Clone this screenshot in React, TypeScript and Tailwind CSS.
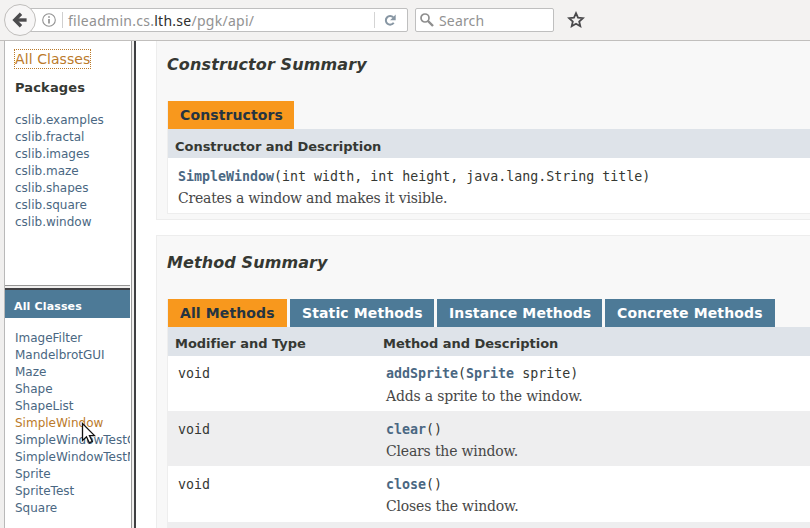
import React from "react";

const sans = "font-['DejaVu_Sans',sans-serif]";
const mono = "font-['DejaVu_Sans_Mono',monospace]";
const serif = "font-['DejaVu_Serif',serif]";

const packages = ["cslib.examples", "cslib.fractal", "cslib.images", "cslib.maze", "cslib.shapes", "cslib.square", "cslib.window"];
const classes = ["ImageFilter", "MandelbrotGUI", "Maze", "Shape", "ShapeList", "SimpleWindow", "SimpleWindowTestGUI", "SimpleWindowTestMain", "Sprite", "SpriteTest", "Square"];

function Toolbar() {
  return (
    <header className="relative flex h-[41px] shrink-0 items-center border-b border-[#c1bfbd] bg-[#f3f2f1] font-['Noto_Sans',sans-serif] text-[14px] text-[#929292]">
      <div className="ml-[20px] flex h-[24px] w-[388px] items-center rounded-[2px] border border-[#bfbfbf] bg-white">
        <svg className="ml-[21px] shrink-0" width="14" height="14" viewBox="0 0 14 14" fill="none" stroke="#929292">
          <circle cx="7" cy="7" r="6.3" strokeWidth="1.1" />
          <path d="M7 6v4.6M7 3.2v1.6" strokeWidth="1.7" />
        </svg>
        <span className="ml-[6px] h-[16px] w-px bg-[#cfcfcf]" />
        <span className="ml-[5px] w-[306px] whitespace-pre pt-px leading-[22px] tracking-[0.27px]">
          fileadmin.cs.<span className="text-[#2e2e2e]">lth.se</span>/pgk/api/
        </span>
        <span className="h-[16px] w-px bg-[#d4d4d4]" />
        <svg className="ml-[9px]" width="13" height="13" viewBox="0 0 13 13">
          <path d="M9.7 8.8A4.3 4.3 0 1 1 9.2 3.3" fill="none" stroke="#8796a3" strokeWidth="2" />
          <path d="M11.7 .6v5.6H6.1z" fill="#8796a3" />
        </svg>
      </div>
      <div className="ml-[7px] flex h-[24px] w-[139px] items-center rounded-[2px] border border-[#bfbfbf] bg-white">
        <svg className="ml-[4px]" width="14" height="14" viewBox="0 0 14 14" fill="none" stroke="#8e8e8e">
          <circle cx="5" cy="5" r="4" strokeWidth="1.7" />
          <path d="M8 8l5 5" strokeWidth="2.4" />
        </svg>
        <span className="ml-[5px] pt-px leading-[22px] tracking-[0.15px]">Search</span>
      </div>
      <svg className="ml-[13px]" width="18" height="18" viewBox="0 0 18 18" fill="none" stroke="#4a4a4c" strokeWidth="1.8">
        <path d="M9 2.2l2 4.5 4.9.5-3.7 3.3 1.1 4.8L9 12.8l-4.3 2.5 1.1-4.8L2.1 7.2 7 6.7z" />
      </svg>
      <div className="absolute left-[4px] top-[4px] flex h-[32px] w-[32px] items-center justify-center rounded-full border border-[#c0bebc] bg-[#f7f6f6]">
        <svg width="16" height="16" viewBox="0 0 16 16" fill="none" stroke="#4c4c4e">
          <path d="M9 1.8L2.8 8 9 14.2" strokeWidth="3.4" />
          <path d="M3 8h11.6" strokeWidth="3.4" />
        </svg>
      </div>
    </header>
  );
}

function Sidebar() {
  return (
    <aside className={`${sans} flex w-[125px] shrink-0 flex-col text-[12px] text-[#4a6782]`}>
      <section className="h-[244px] shrink-0 overflow-hidden bg-white pl-[10px] pt-[9px]">
        <div className="flex h-[18px] w-[75px] items-center whitespace-nowrap text-[14px] tracking-[0.08px] text-[#bb7a2a] outline-1 -outline-offset-0 outline-dotted outline-[#bb7a2a]">All Classes</div>
        <h2 className="mt-[10px] text-[13px] font-bold leading-[20px] tracking-[0.15px] text-[#353833]">Packages</h2>
        <ul className="mt-[14px]">
          {packages.map((p) => <li key={p} className="h-[17px] leading-[17px]">{p}</li>)}
        </ul>
      </section>
      <div className="h-[3px] shrink-0 border-t border-[#959595] bg-[#f0efee]" />
      <section className="relative flex-1 border-t-2 border-[#3f3f42] bg-white">
        <h2 className="h-[28px] bg-[#4d7a97] pl-[9px] pt-px text-[11px] font-bold leading-[31px] tracking-[0.15px] text-white">All Classes</h2>
        <ul className="overflow-hidden pl-[10px] pt-[12px]">
          {classes.map((c) => (
            <li key={c} className={c === "SimpleWindow" ? "h-[17px] whitespace-nowrap leading-[17px] text-[#bb7a2a]" : "h-[17px] whitespace-nowrap leading-[17px]"}>{c}</li>
          ))}
        </ul>
        <svg className="absolute left-[76px] top-[132px]" width="15" height="23" viewBox="0 0 15 23">
          <path d="M1.5 1.5v17l4-3.7 2.8 6 3-1.4-2.8-5.8h5z" fill="#fff" stroke="#111" strokeWidth="1.3" />
        </svg>
      </section>
    </aside>
  );
}

function Tab({ label, width, active }: { label: string; width: string; active?: boolean }) {
  return (
    <div className={`${width} h-[28px] shrink-0 whitespace-nowrap pl-[12px] text-[14px] font-bold leading-[28px] tracking-[0.12px] ${active ? "bg-[#f8981d] text-[#253441]" : "bg-[#4d7a97] text-white"}`}>{label}</div>
  );
}

function MethodRow({ name, params, description, layout, gap, shade }: { name: string; params: React.ReactNode; description: string; layout: string; gap: string; shade?: boolean }) {
  return (
    <div className={`${layout} flex shrink-0 pl-[10px] ${shade ? "bg-[#eeeeef]" : "bg-white"}`}>
      <div className={`${mono} w-[208px] text-[13.3px] leading-[20px] text-[#353833]`}>void</div>
      <div>
        <div className={`${mono} text-[13.3px] leading-[20px] text-[#353833]`}><b className="text-[#4a6782]">{name}</b>{params}</div>
        <div className={`${serif} ${gap} text-[14px] leading-[20px] tracking-[-0.18px] text-[#474747]`}>{description}</div>
      </div>
    </div>
  );
}

function Content() {
  return (
    <main className="flex min-w-0 flex-1 flex-col overflow-hidden bg-white pl-[20px]">
      <section className="h-[179px] shrink-0 border-b border-l border-[#ededed] bg-[#f8f8f8] pl-[10px]">
        <h3 className={`${sans} h-[60px] pt-[14px] text-[16px] font-bold italic leading-[20px] tracking-[0.12px] text-[#353833]`}>Constructor Summary</h3>
        <div className="h-[113px] border-b border-l border-[#eeeeee]">
          <div className={`${sans} flex`}><Tab label="Constructors" width="w-[126px]" active /></div>
          <div className={`${sans} h-[29px] bg-[#dee3e9] pl-[7px] pt-[8px] text-[13px] font-bold leading-[20px] tracking-[-0.03px] text-[#353833]`}>Constructor and Description</div>
          <div className="h-[55px] whitespace-nowrap bg-white pl-[10px] pt-[9px]">
            <div className={`${mono} text-[13.3px] leading-[20px] text-[#353833]`}><b className="text-[#4a6782]">SimpleWindow</b>(int width, int height, java.lang.String title)</div>
            <div className={`${serif} mt-[1px] text-[14px] leading-[20px] tracking-[-0.21px] text-[#474747]`}>Creates a window and makes it visible.</div>
          </div>
        </div>
      </section>
      <section className="mt-[15px] flex-1 overflow-hidden border-l border-t border-[#ededed] bg-[#f8f8f8] pl-[10px]">
        <h3 className={`${sans} h-[63px] pt-[17px] text-[16px] font-bold italic leading-[20px] tracking-[0.1px] text-[#353833]`}>Method Summary</h3>
        <div className="border-l border-[#eeeeee]">
          <div className={`${sans} flex gap-[3px]`}>
            <Tab label="All Methods" width="w-[119px]" active />
            <Tab label="Static Methods" width="w-[144px]" />
            <Tab label="Instance Methods" width="w-[165px]" />
            <Tab label="Concrete Methods" width="w-[170px]" />
          </div>
          <div className={`${sans} flex h-[29px] bg-[#dee3e9] pl-[7px] pt-[7px] text-[13px] font-bold leading-[20px] tracking-[-0.03px] text-[#353833]`}>
            <span className="w-[208px]">Modifier and Type</span>
            <span>Method and Description</span>
          </div>
          <MethodRow name="addSprite" params={<>(<b className="text-[#4a6782]">Sprite</b> sprite)</>} description="Adds a sprite to the window." layout="h-[55px] pt-[8px]" gap="mt-[2px]" />
          <MethodRow name="clear" params="()" description="Clears the window." layout="h-[55px] pt-[9px]" gap="mt-[1px]" shade />
          <MethodRow name="close" params="()" description="Closes the window." layout="h-[56px] pt-[9px]" gap="mt-[1px]" />
          <div className="h-[55px] bg-[#eeeeef]" />
        </div>
      </section>
    </main>
  );
}

export default function App() {
  return (
    <div className="flex h-[528px] w-[810px] flex-col overflow-hidden bg-white">
      <Toolbar />
      <div className="flex min-h-0 flex-1">
        <div className="w-[5px] shrink-0 border-r border-[#b9b9b9] bg-[#f0efee]" />
        <Sidebar />
        <div className="w-px shrink-0 bg-white" />
        <div className="w-[3px] shrink-0 border-l border-[#999999] bg-[#f0efee]" />
        <div className="w-[2px] shrink-0 bg-[#3f3f42]" />
        <Content />
      </div>
    </div>
  );
}
